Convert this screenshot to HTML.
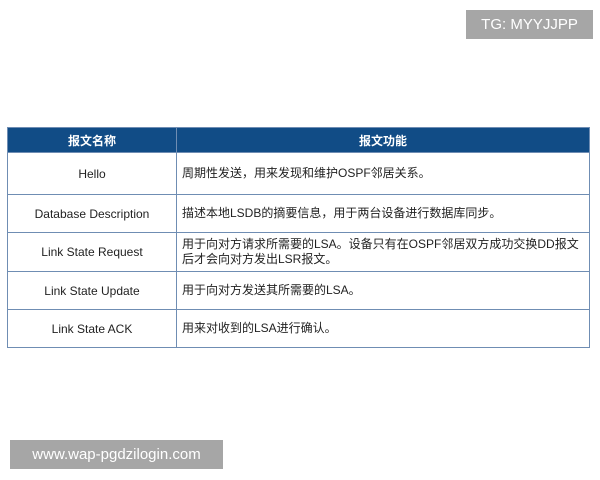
<!DOCTYPE html>
<html><head><meta charset="utf-8"><style>
html,body{margin:0;padding:0;background:#fff;width:600px;height:480px;overflow:hidden;position:relative;font-family:"Liberation Sans","Noto Sans CJK SC",sans-serif}
.wm{position:absolute;background:#a6a6a6;color:#fff;font-size:15px;display:flex;align-items:center;justify-content:center}
table{position:absolute;left:7px;top:127px;width:583px;border-collapse:collapse;font-size:12px;color:#222}
td,th{border:1px solid #6f8db3;padding:0}
th{background:#114c86;color:#fff;font-weight:bold;height:24px;font-size:12px}
td.n{text-align:center;width:168px}
td.f{padding-left:5px;line-height:15px}
</style></head><body>
<div class="wm" style="left:466px;top:10px;width:127px;height:29px">TG: MYYJJPP</div>
<div class="wm" style="left:10px;top:440px;width:213px;height:29px">www.wap-pgdzilogin.com</div>
<table>
<tr><th>报文名称</th><th>报文功能</th></tr>
<tr style="height:42px"><td class="n">Hello</td><td class="f">周期性发送，用来发现和维护OSPF邻居关系。</td></tr>
<tr style="height:38px"><td class="n">Database Description</td><td class="f">描述本地LSDB的摘要信息，用于两台设备进行数据库同步。</td></tr>
<tr style="height:39px"><td class="n">Link State Request</td><td class="f">用于向对方请求所需要的LSA。设备只有在OSPF邻居双方成功交换DD报文<br>后才会向对方发出LSR报文。</td></tr>
<tr style="height:38px"><td class="n">Link State Update</td><td class="f">用于向对方发送其所需要的LSA。</td></tr>
<tr style="height:38px"><td class="n">Link State ACK</td><td class="f">用来对收到的LSA进行确认。</td></tr>
</table>
</body></html>
